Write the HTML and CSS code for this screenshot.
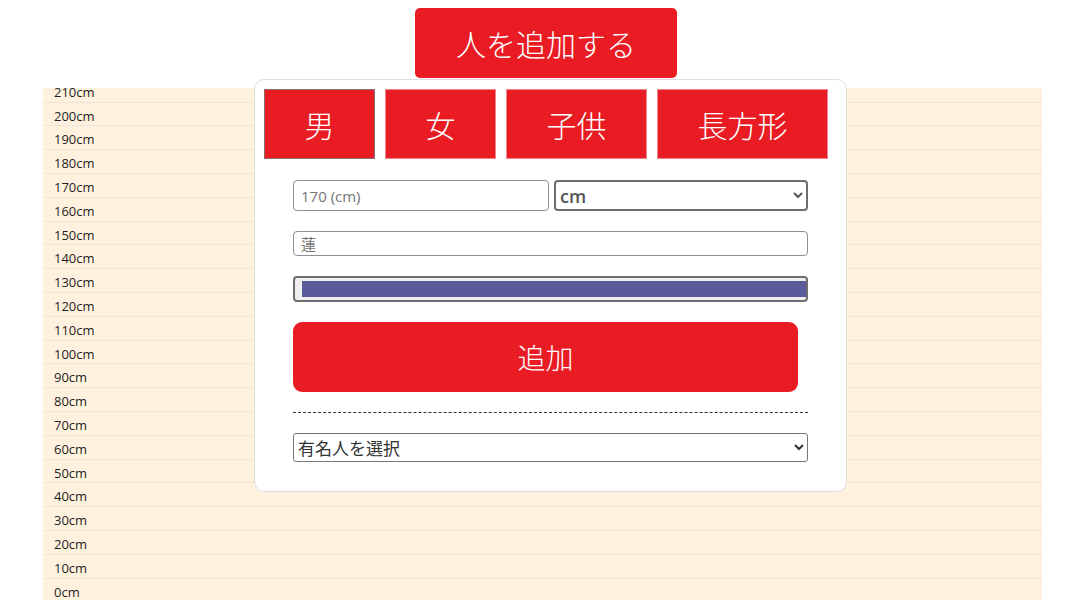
FILE: index.html
```html
<!DOCTYPE html>
<html lang="ja">
<head>
<meta charset="utf-8">
<title>身長比較</title>
<link rel="stylesheet" href="styles.css">
</head>
<body>
<header class="top">
  <button class="add-person">人を追加する</button>
</header>

<section class="chart">
  <div class="rows">
    <div class="row">210cm</div>
    <div class="row">200cm</div>
    <div class="row">190cm</div>
    <div class="row">180cm</div>
    <div class="row">170cm</div>
    <div class="row">160cm</div>
    <div class="row">150cm</div>
    <div class="row">140cm</div>
    <div class="row">130cm</div>
    <div class="row">120cm</div>
    <div class="row">110cm</div>
    <div class="row">100cm</div>
    <div class="row">90cm</div>
    <div class="row">80cm</div>
    <div class="row">70cm</div>
    <div class="row">60cm</div>
    <div class="row">50cm</div>
    <div class="row">40cm</div>
    <div class="row">30cm</div>
    <div class="row">20cm</div>
    <div class="row">10cm</div>
    <div class="row">0cm</div>
  </div>
</section>

<div class="panel">
  <div class="tabs">
    <button class="tab tab-active">男</button>
    <button class="tab">女</button>
    <button class="tab">子供</button>
    <button class="tab">長方形</button>
  </div>
  <div class="form">
    <div class="height-row">
      <input class="field height-input" type="text" placeholder="170 (cm)">
      <select class="unit-select">
        <option>cm</option>
        <option>ft</option>
      </select>
    </div>
    <input class="field name-input" type="text" placeholder="蓮">
    <input class="color-input" type="color" value="#5b5b9b">
    <button class="submit">追加</button>
    <hr class="divider">
    <select class="celeb-select">
      <option>有名人を選択</option>
    </select>
  </div>
</div>
</body>
</html>
```

FILE: styles.css
```css
* {
  box-sizing: border-box;
}

html, body {
  margin: 0;
  padding: 0;
  background: #ffffff;
  height: 600px;
  overflow: hidden;
}

body {
  position: relative;
  font-family: "Open Sans", "Noto Sans CJK JP", sans-serif;
  color: #222;
}

.top {
  display: flex;
  justify-content: center;
  padding: 8px 0 10px 12px;
}

.add-person {
  height: 70px;
  padding: 0 41px;
  border: none;
  border-radius: 5px;
  background: #e91c24;
  color: #fff;
  font-family: "Noto Sans CJK JP", sans-serif;
  font-weight: 300;
  font-size: 30px;
  line-height: 70px;
}

.chart {
  margin: 0 38px 0 43px;
  height: 512px;
  overflow: hidden;
  background: #fef2df;
}

.rows {
  margin-top: -9.2px;
}

.row {
  height: 23.8px;
  border-bottom: 1px solid #f1e5d3;
  padding: 3px 0 0 11px;
  font-size: 13px;
  line-height: 20px;
  color: #1e1e1e;
}

.panel {
  position: absolute;
  top: 79px;
  left: 254px;
  width: 593px;
  height: 413px;
  background: #fff;
  border: 1px solid #dedede;
  border-radius: 10px;
  padding: 9px 0 0 9px;
}

.tabs {
  display: flex;
  gap: 10px;
}

.tab {
  height: 70px;
  padding: 0 39.5px;
  background: #e91c24;
  color: #fff;
  border: 1px solid #f3868a;
  font-family: "Noto Sans CJK JP", sans-serif;
  font-weight: 300;
  font-size: 30px;
  line-height: 66px;
}

.tab-active {
  border-color: #8c6f6f;
}

.form {
  margin: 21px 0 0 29px;
  width: 515px;
  display: flex;
  flex-direction: column;
  gap: 20px;
}

.height-row {
  display: flex;
  gap: 5px;
}

.field {
  border: 1px solid #8f8f8f;
  border-radius: 4px;
  padding: 0 7px;
  font-family: "Open Sans", "Noto Sans CJK JP", sans-serif;
  font-size: 15px;
  color: #222;
  background: #fff;
}

.field::placeholder {
  color: #767676;
}

.height-input {
  width: 256px;
  height: 31px;
}

.unit-select {
  width: 254px;
  height: 31px;
  border: 2px solid #6e6e6e;
  border-radius: 4px;
  padding: 0;
  font-family: "Open Sans", sans-serif;
  font-weight: 600;
  font-size: 18px;
  color: #555;
  background: #fff;
}

.name-input {
  width: 515px;
  height: 25px;
}

.color-input {
  -webkit-appearance: none;
  appearance: none;
  width: 515px;
  height: 26px;
  border: 2px solid #6e6e6e;
  border-radius: 4px;
  background: #efefef;
  padding: 3px 0 3px 7px;
  margin: 0;
}

.color-input::-webkit-color-swatch-wrapper {
  padding: 0;
}

.color-input::-webkit-color-swatch {
  border: none;
  border-radius: 0;
}

.submit {
  width: 505px;
  height: 70px;
  border: none;
  border-radius: 9px;
  background: #e91c24;
  color: #fff;
  font-family: "Noto Sans CJK JP", sans-serif;
  font-weight: 300;
  font-size: 28px;
}

.divider {
  margin: 0;
  height: 0;
  border: none;
  border-top: 1px dashed #333;
}

.celeb-select {
  width: 515px;
  height: 29px;
  border: 1px solid #767676;
  border-radius: 3px;
  padding: 0;
  font-family: "Noto Sans CJK JP", sans-serif;
  font-size: 17px;
  color: #333;
  background: #fff;
}
```
